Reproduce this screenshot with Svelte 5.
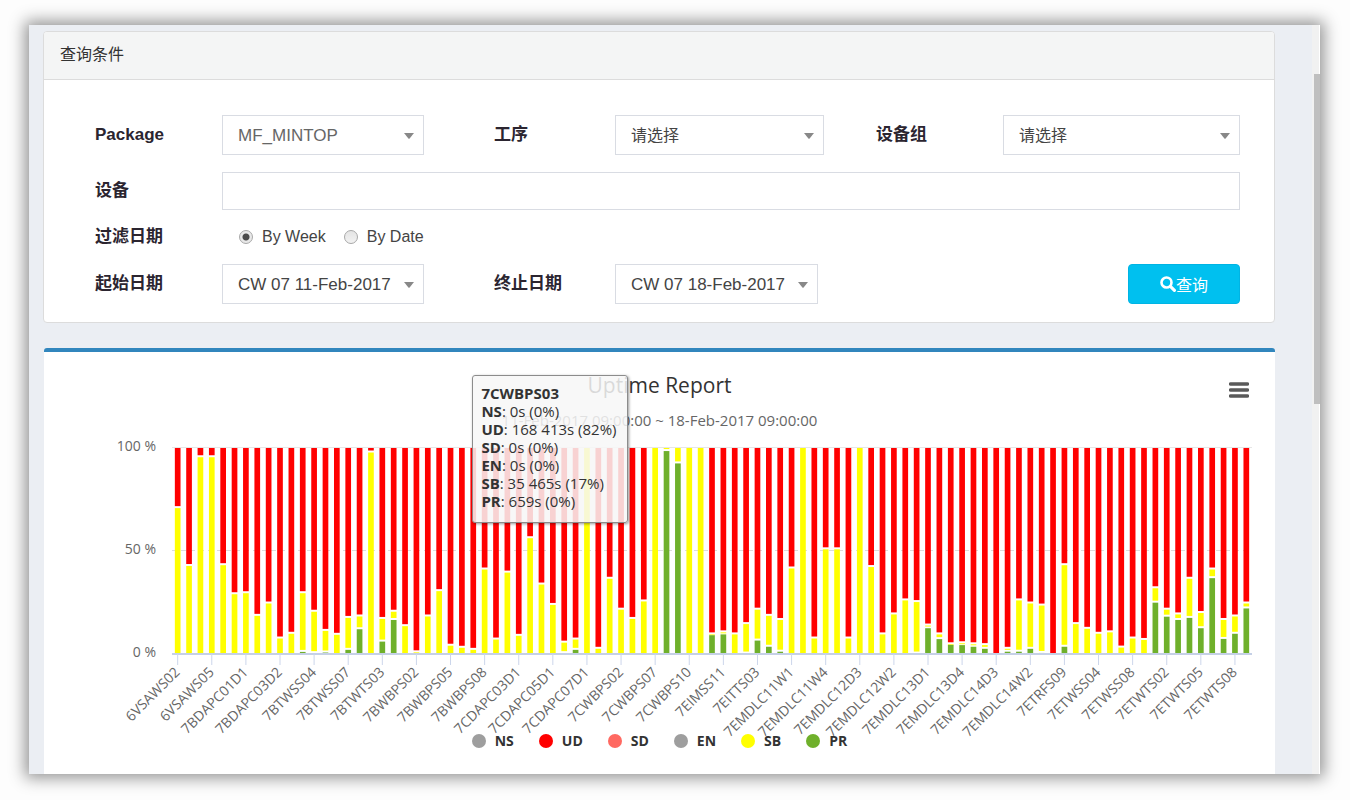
<script>
  const series = [
    { name: 'NS', color: '#9e9e9e' },
    { name: 'UD', color: '#ff0000' },
    { name: 'SD', color: '#ff6961' },
    { name: 'EN', color: '#9e9e9e' },
    { name: 'SB', color: '#ffff00' },
    { name: 'PR', color: '#6fb02b' }
  ];

  // [top of SB, top of PR] in percent, the rest up to 100 is UD
  const bars = [
    [71.3, 0], [43.2, 0], [96, 0], [96, 0], [43.6, 0], [29.5, 0], [30, 0], [19, 0], [25, 0], [8, 0],
    [10.3, 0], [30, 1.5], [21, 0.9], [11.7, 1.2], [9.8, 0], [18, 2.5], [18.7, 12.5], [98.3, 0], [17.5, 6.5], [21, 17],
    [14, 0], [1.3, 0], [18.7, 0], [31, 0], [4.5, 0], [3.5, 0], [2.5, 0], [41.5, 0], [7.5, 0], [40, 0],
    [9.3, 0], [56.7, 0], [34.2, 0], [24.3, 0], [6, 0.9], [7.5, 2.5], [100, 0], [3, 0], [37, 0], [22, 0],
    [17.5, 0], [26, 0], [100, 0], [100, 99], [100, 93], [100, 0], [100, 0], [10, 9.6], [11, 10], [10, 0],
    [15, 0.7], [22, 7], [19, 4], [17, 1.6], [42, 0], [100, 0], [8, 0], [51.3, 0], [51.3, 0], [8, 0],
    [100, 0], [42.7, 0], [10, 0], [19.7, 0], [26.5, 0], [25.7, 0.7], [14.3, 13], [10, 7.7], [5.2, 4.9], [5.7, 4.8],
    [5.2, 4], [4.8, 3], [0, 0], [3, 1.6], [26.5, 1.6], [25, 3], [24, 1], [0, 0], [43.6, 4], [15, 0],
    [12.7, 0], [10.3, 0], [11, 0], [3.6, 0], [8, 0], [7.3, 0], [32.4, 25.4], [22, 18.6], [19.7, 17], [37, 18],
    [20.4, 13], [41.5, 37.3], [17, 7.8], [18.7, 10.3], [25, 22.6]
  ];

  // every third category has a label
  const labels = [
    '6VSAWS02', '6VSAWS05', '7BDAPC01D1', '7BDAPC03D2', '7BTWSS04', '7BTWSS07', '7BTWTS03', '7BWBPS02',
    '7BWBPS05', '7BWBPS08', '7CDAPC03D1', '7CDAPC05D1', '7CDAPC07D1', '7CWBPS02', '7CWBPS07', '7CWBPS10',
    '7EIMSS11', '7EITTS03', '7EMDLC11W1', '7EMDLC11W4', '7EMDLC12D3', '7EMDLC12W2', '7EMDLC13D1', '7EMDLC13D4',
    '7EMDLC14D3', '7EMDLC14W2', '7ETRFS09', '7ETWSS04', '7ETWSS08', '7ETWTS02', '7ETWTS05', '7ETWTS08'
  ];

  const tooltip = [
    ['NS', '0s (0%)'],
    ['UD', '168 413s (82%)'],
    ['SD', '0s (0%)'],
    ['EN', '0s (0%)'],
    ['SB', '35 465s (17%)'],
    ['PR', '659s (0%)']
  ];

  const left = 128;
  const top = 96;
  const plotHeight = 206;
  const hovered = 40;

  let width = $state(1231);
  let mode = $state('week');
  let equipment = $state('');

  let right = $derived(width - 23);
  let step = $derived((right - left) / bars.length);
  let barWidth = $derived(step / 2);

  function center(i) {
    return left + step * (i + 0.5);
  }

  function y(value) {
    return top + plotHeight * (1 - value / 100);
  }

  function segments(bar) {
    const [sb, pr] = bar;
    return [
      { from: 100, to: sb, color: '#ff0000' },
      { from: sb, to: pr, color: '#ffff00' },
      { from: pr, to: 0, color: '#6fb02b' }
    ].filter((s) => s.from > s.to);
  }
</script>

{#snippet caret()}
  <svg class="caret" width="10" height="6" viewBox="0 0 10 6" aria-hidden="true">
    <path d="M0 0h10L5.6 5.4q-.6.6-1.2 0z" fill="#888" />
  </svg>
{/snippet}

<div class="window">
  <main class="content">
    <section class="panel">
      <h1 class="panel-heading">查询条件</h1>
      <form class="panel-body" onsubmit={(e) => e.preventDefault()}>
        <label for="package">Package</label>
        <div class="field first">
          <select id="package" class="muted"><option>MF_MINTOP</option></select>
          {@render caret()}
        </div>
        <label for="process">工序</label>
        <div class="field second">
          <select id="process" class="empty"><option>请选择</option></select>
          {@render caret()}
        </div>
        <label for="group">设备组</label>
        <div class="field">
          <select id="group" class="empty"><option>请选择</option></select>
          {@render caret()}
        </div>

        <label for="equipment">设备</label>
        <input id="equipment" class="wide" type="text" bind:value={equipment} />

        <span class="label" id="filter-label">过滤日期</span>
        <div class="radios" role="radiogroup" aria-labelledby="filter-label">
          <label><input type="radio" name="mode" value="week" bind:group={mode} />By Week</label>
          <label><input type="radio" name="mode" value="date" bind:group={mode} />By Date</label>
        </div>

        <label for="start">起始日期</label>
        <div class="field first">
          <select id="start"><option>CW 07 11-Feb-2017</option></select>
          {@render caret()}
        </div>
        <label for="end">终止日期</label>
        <div class="field end">
          <select id="end"><option>CW 07 18-Feb-2017</option></select>
          {@render caret()}
        </div>
        <button class="search" type="submit">
          <svg width="16" height="16" viewBox="0 0 16 16" aria-hidden="true">
            <circle cx="6.5" cy="6.5" r="5" fill="none" stroke="#fff" stroke-width="2.6" />
            <path d="M10.4 10.4l4 4" stroke="#fff" stroke-width="3.2" stroke-linecap="round" />
          </svg>查询
        </button>
      </form>
    </section>

    <section class="box">
      <div class="chart" bind:clientWidth={width}>
        <svg class="plot" {width} height="378" role="img" aria-label="Uptime Report">
          <text class="title" x={width / 2} y="41">Uptime Report</text>
          <text class="subtitle" x={width / 2} y="74">11-Feb-2017 09:00:00 ~ 18-Feb-2017 09:00:00</text>

          <line x1={left} x2={right} y1={top - 0.5} y2={top - 0.5} stroke="#e6e6e6" />
          <line x1={left} x2={right} y1={y(50) - 0.5} y2={y(50) - 0.5} stroke="#dcdcdc" stroke-dasharray="5 4" />

          {#each [100, 50, 0] as tick}
            <text class="axis y-label" x="112" y={y(tick) + 3}>{tick} %</text>
          {/each}

          {#each bars as bar, i}
            {#each segments(bar) as s}
              <rect
                x={center(i) - barWidth / 2}
                y={y(s.from) + (s.from < 100 ? 1 : 0)}
                width={barWidth}
                height={Math.max(1, y(s.to) - y(s.from) - (s.from < 100 ? 1 : 0) - (s.to > 0 ? 1 : 0))}
                fill={s.color}
              />
            {/each}
          {/each}

          <line x1={left} x2={right} y1={y(0)} y2={y(0)} stroke="#c5d0e6" stroke-width="2" />
          {#each labels as label, i}
            <line x1={center(i * 3)} x2={center(i * 3)} y1={y(0)} y2={y(0) + 11} stroke="#ccd6eb" />
            <text class="axis" transform="translate({center(i * 3) + 3} {y(0) + 19}) rotate(-45)">{label}</text>
          {/each}
        </svg>

        <div class="legend">
          {#each series as s}
            <button type="button">
              <span class="dot" style="background: {s.color}"></span>{s.name}
            </button>
          {/each}
        </div>

        <button class="menu" type="button" aria-label="Chart menu">
          <svg width="20" height="16" viewBox="0 0 20 16" aria-hidden="true">
            <path d="M1.5 2h17M1.5 8h17M1.5 14h17" stroke="#5a5a5a" stroke-width="3.4" stroke-linecap="round" />
          </svg>
        </button>

        <div class="tooltip" style="left: {center(hovered) - 160}px">
          <b>7CWBPS03</b>
          {#each tooltip as [name, value]}
            <div><b>{name}</b>: {value}</div>
          {/each}
        </div>
      </div>
    </section>
  </main>
  <div class="scrollbar"><div class="thumb"></div></div>
</div>

<style>
  :global(body) {
    margin: 0;
    background: #fdfdfd;
    font-family: "Liberation Sans", "Noto Sans CJK SC", sans-serif;
    color: #444;
  }

  * {
    box-sizing: border-box;
  }

  .window {
    display: flex;
    margin: 25px 30px 26px 29px;
    background: #ebeef3;
    box-shadow: 0 0 15px 4px rgba(0, 0, 0, 0.42);
    overflow: hidden;
  }

  .content {
    flex: 1;
    min-width: 0;
    padding: 6px 37px 0 14px;
  }

  .scrollbar {
    width: 8px;
    background: #f1f1f1;
    border-right: 1px solid #fff;
  }

  .thumb {
    height: 44%;
    margin: 49px -1px 0 2px;
    background: #bfbfbf;
  }

  .panel {
    margin-bottom: 25px;
    background: #fff;
    border: 1px solid #dcdcdc;
    border-radius: 4px;
    overflow: hidden;
  }

  .panel-heading {
    margin: 0;
    padding: 11px 16px 12px;
    background: #f4f5f5;
    border-bottom: 1px solid #dcdcdc;
    font-size: 16px;
    font-weight: normal;
    line-height: 24px;
    color: #333;
  }

  .panel-body {
    display: grid;
    grid-template-columns: 127fr 272fr 121fr 261fr 127fr 237fr;
    row-gap: 17px;
    align-items: center;
    padding: 35px 34px 18px 51px;
  }

  .panel-body > label,
  .label {
    font-size: 17px;
    font-weight: bold;
    line-height: 20px;
    color: #2b2530;
  }

  .field {
    position: relative;
  }

  .field.first {
    margin-right: 70px;
  }

  .field.second {
    margin-right: 52px;
  }

  .field.end {
    margin-right: 58px;
  }

  select,
  .wide {
    display: block;
    width: 100%;
    height: 40px;
    margin: 0;
    padding: 0 15px;
    border: 1px solid #d9dce3;
    border-radius: 0;
    outline: none;
    background: #fff;
    color: #444;
    font: 17px "Liberation Sans", "Noto Sans CJK SC", sans-serif;
    appearance: none;
  }

  select.muted {
    color: #666;
  }

  select.empty {
    font-size: 16px;
  }

  .wide {
    grid-column: 2 / -1;
    height: 38px;
  }

  .caret {
    position: absolute;
    top: 18px;
    right: 10px;
    pointer-events: none;
  }

  .radios {
    grid-column: 2 / -1;
    display: flex;
    gap: 18px;
    padding-left: 17px;
    font-size: 16px;
    line-height: 20px;
  }

  .radios label {
    display: flex;
    align-items: center;
    gap: 9px;
  }

  .radios input {
    appearance: none;
    width: 14px;
    height: 14px;
    margin: 0;
    border: 1px solid #a8a8a8;
    border-radius: 50%;
    background: linear-gradient(#e4e4e4, #f2f2f2);
  }

  .radios input:checked {
    background: radial-gradient(circle, #4a4a4a 3px, #e8e8e8 4px);
  }

  .search {
    grid-column: 5 / -1;
    justify-self: end;
    display: flex;
    align-items: center;
    justify-content: center;
    width: 112px;
    height: 40px;
    border: 1px solid #00b4e4;
    border-radius: 4px;
    background: #00c0ef;
    color: #fff;
    font: 16px "Noto Sans CJK SC", sans-serif;
    cursor: pointer;
  }

  .box {
    margin-left: 1px;
    background: #fff;
    border-top: 4px solid #3186bd;
    border-radius: 3px 3px 0 0;
  }

  .chart {
    position: relative;
    padding-bottom: 22px;
    font-family: "Open Sans", "Noto Sans", sans-serif;
  }

  .plot {
    display: block;
    overflow: visible;
  }

  .title {
    font-size: 21px;
    fill: #333;
    text-anchor: middle;
  }

  .subtitle {
    font-size: 15px;
    fill: #666;
    text-anchor: middle;
  }

  .axis {
    font-size: 14px;
    fill: #666;
    text-anchor: end;
  }

  .legend {
    display: flex;
    justify-content: center;
    gap: 25px;
  }

  .legend button {
    display: flex;
    align-items: center;
    gap: 9px;
    padding: 0;
    border: none;
    background: none;
    color: #333;
    font: bold 14px/22px "Open Sans", "Noto Sans", sans-serif;
    cursor: pointer;
  }

  .dot {
    width: 14px;
    height: 14px;
    border-radius: 50%;
  }

  .menu {
    position: absolute;
    top: 30px;
    right: 26px;
    display: flex;
    padding: 0;
    border: none;
    background: none;
    cursor: pointer;
  }

  .tooltip {
    position: absolute;
    top: 23px;
    padding: 8px 10px 12px 8px;
    border: 1px solid #8c8c8c;
    border-radius: 3px;
    background: rgba(247, 247, 247, 0.85);
    box-shadow: 1px 1px 3px rgba(0, 0, 0, 0.4);
    color: #333;
    font-size: 15px;
    line-height: 18px;
    white-space: nowrap;
  }
</style>
